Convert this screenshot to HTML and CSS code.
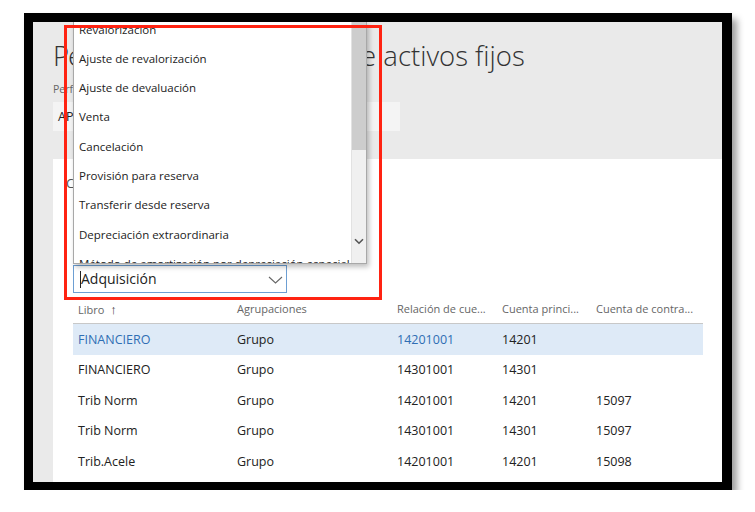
FILE: index.html
```html
<!DOCTYPE html>
<html lang="es">
<head>
<meta charset="utf-8">
<title>Perfiles de contabilización de activos fijos</title>
<link rel="stylesheet" href="styles.css">
</head>
<body>
<div class="frame">
  <div class="screen">
    <div class="header">
      <h1 class="title"><span class="title-lead">Perfiles de contabilización d</span>e activos fijos</h1>
      <div class="label">Perfil de contabilización</div>
      <div class="input">APLICAR</div>
    </div>
    <div class="panel">
      <div class="tab">C</div>
      <div class="combo">
        <span class="combo-text"><span class="caret"></span>Adquisición</span>
        <svg class="combo-chev" width="15" height="8" viewBox="0 0 15 8"><path d="M1 1 L7.5 7 L14 1" fill="none" stroke="#666" stroke-width="1.1"/></svg>
      </div>
      <div class="grid">
        <div class="row head">
          <div class="c c1">Libro <span class="arrow">↑</span></div>
          <div class="c c2">Agrupaciones</div>
          <div class="c c3">Relación de cue...</div>
          <div class="c c4">Cuenta princi...</div>
          <div class="c c5">Cuenta de contra...</div>
        </div>
        <div class="row sel">
          <div class="c c1 link">FINANCIERO</div>
          <div class="c c2">Grupo</div>
          <div class="c c3 link">14201001</div>
          <div class="c c4">14201</div>
          <div class="c c5"></div>
        </div>
        <div class="row">
          <div class="c c1">FINANCIERO</div>
          <div class="c c2">Grupo</div>
          <div class="c c3">14301001</div>
          <div class="c c4">14301</div>
          <div class="c c5"></div>
        </div>
        <div class="row">
          <div class="c c1">Trib Norm</div>
          <div class="c c2">Grupo</div>
          <div class="c c3">14201001</div>
          <div class="c c4">14201</div>
          <div class="c c5">15097</div>
        </div>
        <div class="row">
          <div class="c c1">Trib Norm</div>
          <div class="c c2">Grupo</div>
          <div class="c c3">14301001</div>
          <div class="c c4">14301</div>
          <div class="c c5">15097</div>
        </div>
        <div class="row">
          <div class="c c1">Trib.Acele</div>
          <div class="c c2">Grupo</div>
          <div class="c c3">14201001</div>
          <div class="c c4">14201</div>
          <div class="c c5">15098</div>
        </div>
      </div>
    </div>

    <div class="dropdown">
      <ul class="list">
        <li>Revalorización</li>
        <li>Ajuste de revalorización</li>
        <li>Ajuste de devaluación</li>
        <li>Venta</li>
        <li>Cancelación</li>
        <li>Provisión para reserva</li>
        <li>Transferir desde reserva</li>
        <li>Depreciación extraordinaria</li>
        <li>Método de amortización por depreciación especial</li>
      </ul>
      <div class="scrollbar">
        <div class="thumb"></div>
        <svg class="sb-chev" width="10" height="7" viewBox="0 0 10 7"><path d="M1 1.2 L5 5.2 L9 1.2" fill="none" stroke="#555" stroke-width="1.6"/></svg>
      </div>
    </div>

    <div class="highlight"></div>
  </div>
</div>
</body>
</html>
```

FILE: styles.css
```css
* { box-sizing: border-box; }

html, body {
  margin: 0;
  padding: 0;
  background: #ffffff;
}

body {
  font-family: "Open Sans", "Noto Sans", "Liberation Sans", sans-serif;
  color: #222;
}

.frame {
  margin: 13px 0 0 24px;
  width: 708px;
  height: 477px;
  border-style: solid;
  border-color: #000;
  border-width: 9px 10px 8px 9px;
  box-shadow: 5px 6px 7px rgba(0, 0, 0, 0.38);
}

.screen {
  position: relative;
  width: 689px;
  height: 460px;
  overflow: hidden;
  background: #eaeaea;
}

/* header area */
.header {
  height: 137px;
  padding: 19px 0 0 20px;
}

.title {
  margin: 0;
  font-family: "Open Sans", "Noto Sans", sans-serif;
  font-weight: 300;
  font-size: 27.5px;
  line-height: 30px;
  color: #333;
  white-space: nowrap;
}

.title-lead {
  letter-spacing: -1.2px;
}

.label {
  margin-top: 11px;
  font-size: 10.5px;
  line-height: 14px;
  color: #666;
}

.input {
  margin-top: 6px;
  width: 347px;
  height: 29px;
  padding: 0 0 0 5px;
  background: #f4f4f4;
  font-size: 12.5px;
  line-height: 29px;
  color: #222;
}

/* white panel */
.panel {
  margin-left: 20px;
  height: 323px;
  background: #ffffff;
  padding: 17px 0 0 13px;
}

.tab {
  font-size: 13px;
  line-height: 14px;
  color: #555;
  height: 14px;
}

.combo {
  margin: 75px 0 0 7px;
  width: 214px;
  height: 28px;
  border: 1px solid #6d9fd3;
  display: flex;
  align-items: center;
  justify-content: space-between;
  padding: 0 3px 0 6px;
}

.combo-text {
  font-size: 14px;
  line-height: 18px;
  color: #222;
  display: flex;
  align-items: center;
}

.caret {
  display: inline-block;
  width: 1px;
  height: 17px;
  background: #222;
}

.combo-chev { display: block; margin-top: 1px; }

/* grid */
.grid {
  margin: 7px 0 0 7px;
  width: 630px;
}

.row {
  display: flex;
  height: 30.5px;
  align-items: center;
  font-size: 12.5px;
  color: #222;
}

.row.head {
  height: 24px;
  align-items: flex-start;
  padding-top: 2px;
  font-size: 11px;
  line-height: 14px;
  color: #666;
  border-bottom: 1px solid #c8c8c8;
}

.row.sel {
  background: #deeaf7;
}

.c {
  padding-left: 5px;
  white-space: nowrap;
  overflow: hidden;
}

.c1 { width: 159px; }
.c2 { width: 160px; }
.c3 { width: 105px; }
.c4 { width: 94px; }
.c5 { width: 112px; }

.link { color: #2f6eb4; }

.arrow {
  font-size: 13px;
  margin-left: 3px;
  color: #444;
}

/* dropdown overlay */
.dropdown {
  position: absolute;
  left: 40px;
  top: 0;
  width: 294px;
  height: 242px;
  background: #fff;
  border: 1px solid #a8a8a8;
  border-top: none;
  box-shadow: 2px 3px 5px rgba(0, 0, 0, 0.25);
  overflow: hidden;
}

.list {
  list-style: none;
  margin: -7.5px 0 0 0;
  padding: 0;
}

.list li {
  height: 29.3px;
  line-height: 29.3px;
  padding-left: 5px;
  font-size: 11.5px;
  color: #222;
  white-space: nowrap;
}

.scrollbar {
  position: absolute;
  right: 0;
  top: 0;
  width: 15px;
  height: 100%;
  background: #f0f0f0;
  border-left: 1px solid #e2e2e2;
}

.thumb {
  width: 100%;
  height: 128px;
  background: #cdcdcd;
}

.sb-chev {
  position: absolute;
  left: 2px;
  top: 216px;
}

/* red annotation box */
.highlight {
  position: absolute;
  left: 31px;
  top: 3px;
  width: 318px;
  height: 275px;
  border: 3px solid #ff2312;
  pointer-events: none;
}
```
